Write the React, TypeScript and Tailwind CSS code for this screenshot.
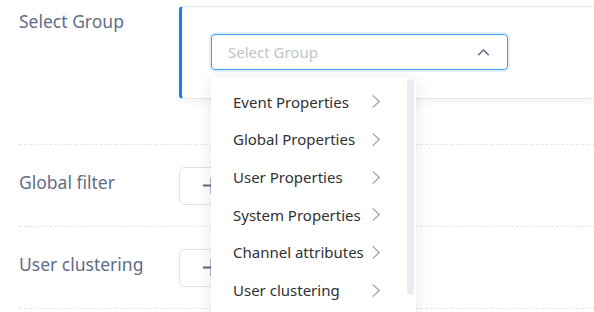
import React from "react";

const groups = [
  "Event Properties",
  "Global Properties",
  "User Properties",
  "System Properties",
  "Channel attributes",
  "User clustering",
];

function Chevron({ className }: { className?: string }) {
  return (
    <svg viewBox="0 0 10 16" className={className} fill="none" stroke="currentColor" strokeWidth="1.3">
      <path d="M1.5 1.5 L8.5 8 L1.5 14.5" />
    </svg>
  );
}

function AddButton() {
  return (
    <button className="w-[64px] h-[38px] rounded-[6px] border border-[#dcdfe6] bg-white flex items-center justify-center text-[#5b6b8a]">
      <svg viewBox="0 0 20 20" className="w-[19px] h-[19px]" stroke="currentColor" strokeWidth="2">
        <path d="M10 1 V19 M1 10 H19" />
      </svg>
    </button>
  );
}

export default function App() {
  return (
    <div
      className="relative w-[594px] h-[312px] overflow-hidden bg-white"
      style={{ fontFamily: '"Noto Sans", "Open Sans", sans-serif' }}
    >
      <div className="pl-[19px] pt-[6px]">
        {/* Select Group */}
        <div className="flex">
          <div className="w-[160px] pt-[2px] text-[17.5px] text-[#5f6d86]">Select Group</div>
          <div className="flex-1 h-[93px] rounded-l-[4px] border-y border-[#e6e7ef] border-l-[3px] border-l-[#1a7ff5] bg-white shadow-[0_3px_8px_rgba(0,0,0,0.05)] pl-[29px] pt-[27px]">
            <div className="w-[297px] h-[36px] rounded-[4px] border border-[#409eff] shadow-[0_0_0_2px_rgba(64,158,255,0.15)] flex items-center justify-between pl-[16px] pr-[17px]">
              <span className="text-[15px] text-[#c0c4cc]">Select Group</span>
              <svg viewBox="0 0 14 8" className="w-[13px] h-[7px] text-[#5f6b80]" fill="none" stroke="currentColor" strokeWidth="1.6">
                <path d="M1 7 L7 1.2 L13 7" />
              </svg>
            </div>
          </div>
        </div>

        {/* Global filter */}
        <div className="mt-[45px] border-t border-dashed border-[#e4e6eb] flex items-center h-[82px]">
          <div className="w-[160px] text-[17.5px] text-[#5f6d86] pb-[7px]">Global filter</div>
          <AddButton />
        </div>

        {/* User clustering */}
        <div className="border-t border-dashed border-[#e4e6eb] flex items-center h-[82px]">
          <div className="w-[160px] text-[17.5px] text-[#5f6d86] pb-[7px]">User clustering</div>
          <AddButton />
        </div>
        <div className="border-t border-dashed border-[#e4e6eb]" />
      </div>

      {/* dropdown */}
      <div className="absolute left-[211px] top-[77px] w-[205px] h-[260px] rounded-[6px] bg-white shadow-[0_2px_16px_rgba(0,0,0,0.1)]">
        <div className="absolute right-[2px] top-[2px] w-[7px] h-[216px] rounded-full bg-[#ebecf3]" />
        <ul className="pt-[6px]">
          {groups.map((g) => (
            <li key={g} className="h-[37.7px] flex items-center pl-[22px] text-[15px] text-[#303133]">
              <span className="w-[138px] whitespace-nowrap">{g}</span>
              <Chevron className="w-[10px] h-[15px] text-[#9ca0a8]" />
            </li>
          ))}
        </ul>
      </div>
    </div>
  );
}
